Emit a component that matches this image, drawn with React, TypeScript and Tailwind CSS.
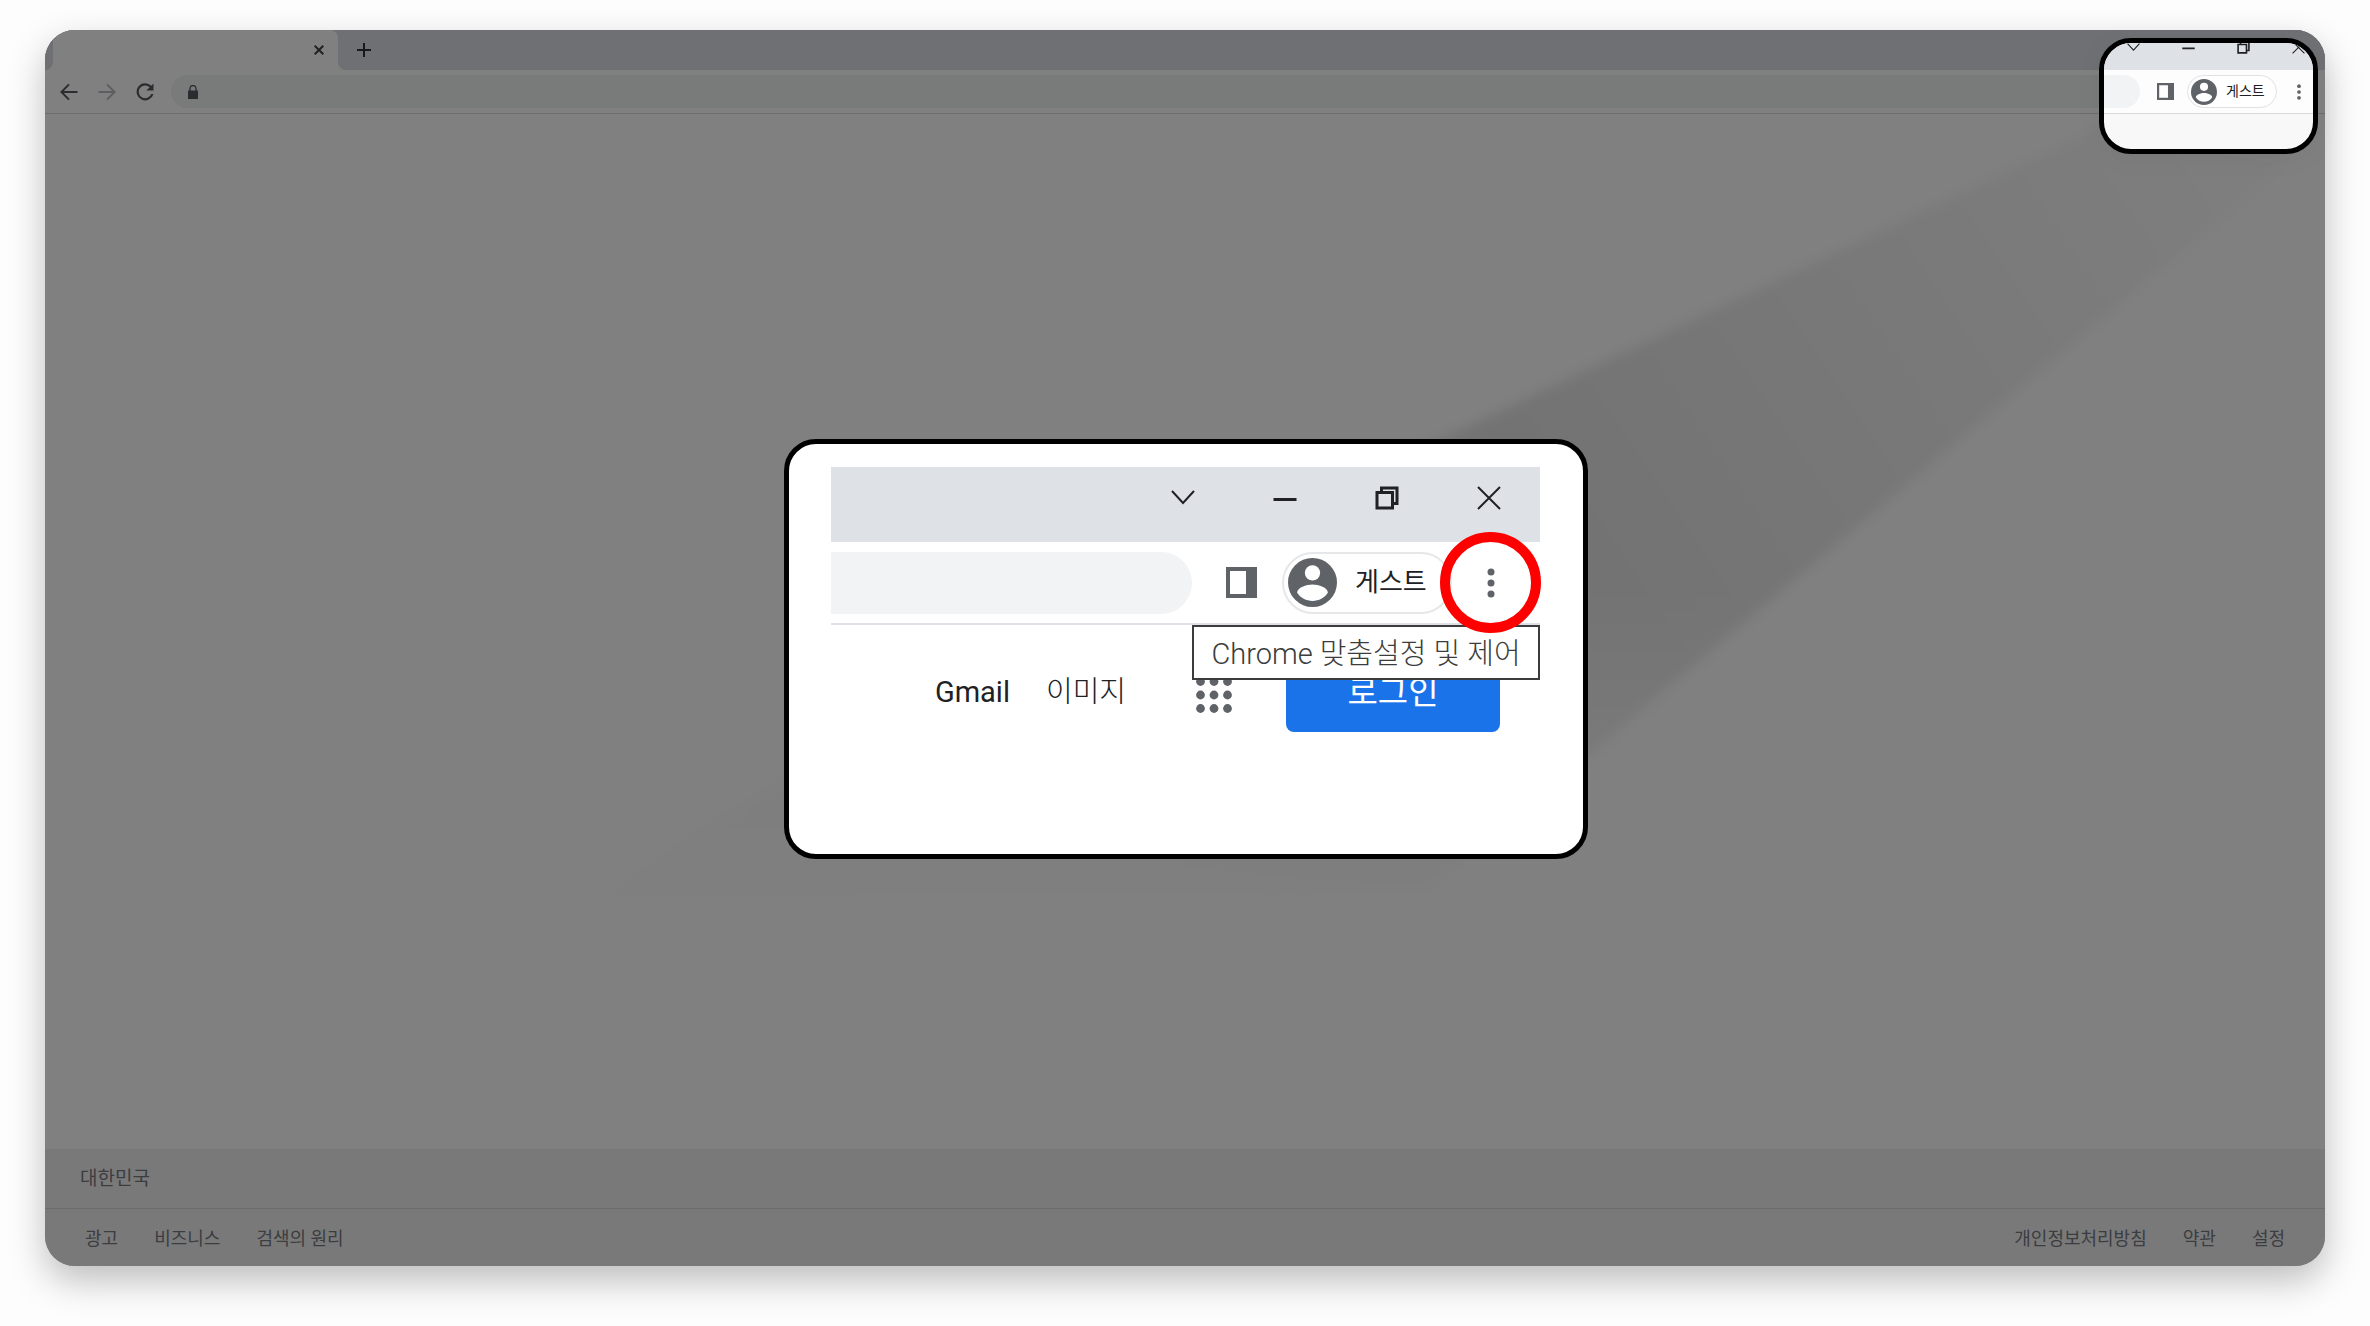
import type { ReactNode } from "react";

interface IconProps {
  readonly className?: string;
}

interface ControlButtonProps {
  readonly label: string;
  readonly className: string;
  readonly children: ReactNode;
}

const LEFT_LINKS = ["광고", "비즈니스", "검색의 원리"];
const RIGHT_LINKS = ["개인정보처리방침", "약관", "설정"];

function ChevronIcon({ className }: IconProps) {
  return (
    <svg viewBox="0 0 24 24" className={className} fill="none" stroke="currentColor" strokeWidth="2">
      <path d="M1 5l11 12L23 5" />
    </svg>
  );
}

function MinimizeIcon({ className }: IconProps) {
  return (
    <svg viewBox="0 0 24 24" className={className} fill="none" stroke="currentColor" strokeWidth="3">
      <path d="M.5 13.5h23" />
    </svg>
  );
}

function RestoreIcon({ className }: IconProps) {
  return (
    <svg viewBox="0 0 24 24" className={className} fill="none" stroke="currentColor" strokeWidth="3">
      <path d="M2 6.5h15.5V22H2zM6.5 6.5V2H22v15.5h-4.5" />
    </svg>
  );
}

function CloseIcon({ className }: IconProps) {
  return (
    <svg viewBox="0 0 24 24" className={className} fill="none" stroke="currentColor" strokeWidth="2">
      <path d="M1 1l22 22M23 1L1 23" />
    </svg>
  );
}

function SidePanelIcon({ className }: IconProps) {
  return (
    <svg viewBox="0 0 31 31" className={className} fill="#5f6368">
      <path fillRule="evenodd" d="M0 0h31v31H0zM4 4v23h16V4z" />
    </svg>
  );
}

function AvatarIcon({ className }: IconProps) {
  return (
    <svg viewBox="0 0 48 48" className={className}>
      <circle cx="24" cy="24" r="24" fill="#5f6368" />
      <circle cx="24" cy="14.5" r="7.5" fill="#fff" />
      <path d="M9 34c0-5 9-8 15-8s15 3 15 8c-3 5-9 8-15 8s-12-3-15-8z" fill="#fff" />
    </svg>
  );
}

function MoreIcon({ className }: IconProps) {
  return (
    <svg viewBox="0 0 8 30" className={className} fill="#5f6368">
      <circle cx="4" cy="4" r="3.5" />
      <circle cx="4" cy="15" r="3.5" />
      <circle cx="4" cy="26" r="3.5" />
    </svg>
  );
}

function AppsIcon({ className }: IconProps) {
  return (
    <svg viewBox="0 0 36 36" className={className} fill="#5f6368">
      {[4.5, 18, 31.5].map((y) =>
        [4.5, 18, 31.5].map((x) => <circle key={`${x}-${y}`} cx={x} cy={y} r="4.4" />)
      )}
    </svg>
  );
}

function ControlButton({ label, className, children }: ControlButtonProps) {
  return (
    <button type="button" aria-label={label} className={`flex shrink-0 items-center justify-center ${className}`}>
      {children}
    </button>
  );
}

function TabStrip() {
  return (
    <div className="flex h-10 bg-[#6f7073]">
      <div className="w-2 bg-[#808080]">
        <div className="h-full rounded-br-lg bg-[#6f7073]" />
      </div>
      <div className="flex w-[285px] items-center justify-end rounded-tr-lg bg-[#808080] pr-[14px]">
        <ControlButton label="탭 닫기" className="size-[10px] text-[#202124]">
          <svg viewBox="0 0 10 10" className="size-[10px]" stroke="currentColor" strokeWidth="2">
            <path d="M.7.7l8.6 8.6M9.3.7L.7 9.3" />
          </svg>
        </ControlButton>
      </div>
      <div className="flex flex-1 bg-[#808080]">
        <div className="flex flex-1 items-center rounded-bl-lg bg-[#6f7073] pl-[19px]">
          <ControlButton label="새 탭" className="size-[14px] text-[#18191b]">
            <svg viewBox="0 0 14 14" className="size-[14px]" stroke="currentColor" strokeWidth="2">
              <path d="M7 0v14M0 7h14" />
            </svg>
          </ControlButton>
        </div>
      </div>
    </div>
  );
}

function Toolbar() {
  return (
    <div className="flex h-11 items-center border-b border-[#6c6d6e] pl-3 pr-[185px] text-[#2a2c2f]">
      <ControlButton label="뒤로" className="size-6">
        <svg viewBox="0 0 24 24" className="size-6" fill="currentColor">
          <path d="M20.5 11H6.8l5.9-5.9L11.3 3.7 3 12l8.3 8.3 1.4-1.4L6.8 13h13.7z" />
        </svg>
      </ControlButton>
      <ControlButton label="앞으로" className="ml-[14px] size-6 text-[#5c5e61]">
        <svg viewBox="0 0 24 24" className="size-6" fill="currentColor">
          <path d="M3.5 11h13.7l-5.9-5.9 1.4-1.4L21 12l-8.3 8.3-1.4-1.4 5.9-5.9H3.5z" />
        </svg>
      </ControlButton>
      <ControlButton label="새로고침" className="ml-[14px] size-6">
        <svg viewBox="0 0 24 24" className="size-6" fill="currentColor">
          <path d="M18.3 5.7A8.6 8.6 0 1 0 20.5 14h-2.3a6.4 6.4 0 1 1-1.5-6.7L13.3 10.6h7.2V3.5z" />
        </svg>
      </ControlButton>
      <label className="ml-[14px] flex h-[33px] flex-1 items-center rounded-full bg-[#797a7a] pl-[17px]">
        <svg viewBox="0 0 10 14" className="h-[14px] w-[10px]" fill="currentColor">
          <path d="M0 5.5h10V14H0z" />
          <path d="M2 6V3.5a3 3 0 0 1 6 0V6" fill="none" stroke="currentColor" strokeWidth="1.3" />
        </svg>
        <input aria-label="주소창" className="ml-3 min-w-0 flex-1 bg-transparent text-sm outline-none" />
      </label>
    </div>
  );
}

function Footer() {
  return (
    <footer className="bg-[#797979] text-[#3b3d40]">
      <div className="flex h-[60px] items-center border-b border-[#6b6c6d] px-[35px] pt-0.5 text-[19px]">대한민국</div>
      <div className="flex h-[57px] items-center justify-between px-10 pt-0.5 text-[18px]">
        <nav className="flex gap-9">
          {LEFT_LINKS.map((link) => (
            <a key={link} href="#">{link}</a>
          ))}
        </nav>
        <nav className="flex gap-9">
          {RIGHT_LINKS.map((link) => (
            <a key={link} href="#">{link}</a>
          ))}
        </nav>
      </div>
    </footer>
  );
}

// Shadow cast from the corner lens down to the zoom panel
function Beam() {
  return (
    <svg
      viewBox="0 0 2280 1236"
      preserveAspectRatio="none"
      className="pointer-events-none absolute inset-0 h-full w-full"
    >
      <defs>
        <linearGradient id="beam" gradientUnits="userSpaceOnUse" x1="2180" y1="80" x2="1000" y2="870">
          <stop offset="0" stopColor="#000" stopOpacity="0.01" />
          <stop offset="0.55" stopColor="#000" stopOpacity="0.1" />
          <stop offset="0.7" stopColor="#000" stopOpacity="0.09" />
          <stop offset="1" stopColor="#000" stopOpacity="0.03" />
        </linearGradient>
        <linearGradient id="fade" gradientUnits="userSpaceOnUse" x1="0" y1="560" x2="0" y2="870">
          <stop offset="0" stopColor="#fff" />
          <stop offset="1" stopColor="#fff" stopOpacity="0.1" />
        </linearGradient>
        <mask id="beam-mask" maskUnits="userSpaceOnUse" x="0" y="0" width="2280" height="1236">
          <rect width="2280" height="1236" fill="url(#fade)" />
        </mask>
        <filter id="soften">
          <feGaussianBlur stdDeviation="6" />
        </filter>
      </defs>
      <g mask="url(#beam-mask)">
        <path d="M2245 129L1543 725L1378 860L557 868L734 753L1398 408L2056 98z" fill="url(#beam)" filter="url(#soften)" />
      </g>
    </svg>
  );
}

function CornerLens() {
  return (
    <section className="absolute right-[7px] top-2 flex h-[116px] w-[219px] flex-col overflow-hidden rounded-[32px] border-[5px] border-black bg-[#f8f8f8] text-[#202124] shadow-[0_4px_30px_rgba(0,0,0,0.04)]">
      <div className="flex h-[27px] shrink-0 items-start justify-end bg-[#dee1e6]">
        <div className="-mr-[13px] -mt-1 flex">
          <ControlButton label="탭 검색" className="h-4 w-[55px]"><ChevronIcon className="size-[13px]" /></ControlButton>
          <ControlButton label="최소화" className="h-4 w-[55px]"><MinimizeIcon className="size-[13px]" /></ControlButton>
          <ControlButton label="이전 크기로 복원" className="h-4 w-[55px]"><RestoreIcon className="size-[13px]" /></ControlButton>
          <ControlButton label="닫기" className="h-4 w-[55px]"><CloseIcon className="size-[13px]" /></ControlButton>
        </div>
      </div>
      <div className="flex h-11 shrink-0 items-center border-b border-[#d8dadc] bg-[#fdfdfd] pr-[6px]">
        <div className="h-[33px] flex-1 rounded-r-full bg-[#f1f3f4]" />
        <ControlButton label="측면 패널" className="ml-[17px] size-[17px]"><SidePanelIcon className="size-[17px]" /></ControlButton>
        <button type="button" className="ml-[13px] flex h-[33px] w-[90px] items-center rounded-full border border-[#dfe1e4] bg-white pl-[3px] text-[14px]">
          <AvatarIcon className="size-[26px] shrink-0" />
          <span className="ml-[9px]">게스트</span>
        </button>
        <ControlButton label="Chrome 맞춤설정 및 제어" className="ml-[14px] w-4"><MoreIcon className="h-4 w-4" /></ControlButton>
      </div>
    </section>
  );
}

function ZoomPanel() {
  return (
    <section className="w-[804px] rounded-[32px] border-[5px] border-black bg-white pb-[122px] pl-[42px] pr-[43px] pt-[23px] text-[#202124]">
      <div className="flex h-[75px] items-start justify-end bg-[#dee1e6]">
        <ControlButton label="탭 검색" className="h-[62px] w-[102px]"><ChevronIcon className="size-6" /></ControlButton>
        <ControlButton label="최소화" className="h-[62px] w-[102px]"><MinimizeIcon className="size-6" /></ControlButton>
        <ControlButton label="이전 크기로 복원" className="h-[62px] w-[102px]"><RestoreIcon className="size-6" /></ControlButton>
        <ControlButton label="닫기" className="h-[62px] w-[102px]"><CloseIcon className="size-6" /></ControlButton>
      </div>

      <div className="relative flex h-[83px] items-center border-b-2 border-[#dee1e6] pr-[10px]">
        <div className="h-[62px] flex-1 rounded-r-full bg-[#f1f3f4]" />
        <ControlButton label="측면 패널" className="ml-[34px]"><SidePanelIcon className="size-[31px]" /></ControlButton>
        <button type="button" className="ml-[25px] flex h-[62px] w-[170px] items-center rounded-full border-2 border-[#e6e7e9] pl-1 text-[26px]">
          <AvatarIcon className="size-[49px] shrink-0" />
          <span className="ml-[18px]">게스트</span>
        </button>
        <div className="relative flex h-[62px] w-[78px] items-center justify-center">
          <ControlButton label="Chrome 맞춤설정 및 제어" className="size-10"><MoreIcon className="h-[30px] w-2" /></ControlButton>
          <span className="pointer-events-none absolute -left-3 -top-5 z-20 size-[101px] rounded-full border-10 border-[#ff0000]" />
        </div>
        <div
          role="tooltip"
          className="absolute right-0 top-[83px] z-10 flex h-[55px] w-[348px] items-center justify-center whitespace-nowrap border-2 border-[#3c3c3c] bg-white pt-1 text-[29px] font-light text-[#3c3c3c]"
        >
          Chrome 맞춤설정 및 제어
        </div>
      </div>

      <div className="flex items-center justify-end pr-10 pt-8 text-[29px]">
        <a href="#" className="pb-1">Gmail</a>
        <a href="#" className="ml-9 pb-1 font-light">이미지</a>
        <ControlButton label="Google 앱" className="ml-[70px]"><AppsIcon className="size-9" /></ControlButton>
        <button type="button" className="ml-[54px] h-[75px] w-[214px] rounded-lg bg-[#1a73e8] pb-1 text-[33px] text-white">
          로그인
        </button>
      </div>
    </section>
  );
}

export default function App() {
  return (
    <main className="flex min-h-screen flex-col bg-[#fdfdfd] px-[45px] pb-[60px] pt-[30px] font-['Roboto','Noto_Sans_CJK_KR',sans-serif]">
      <div className="relative flex flex-1 flex-col">
        <div className="relative flex flex-1 flex-col overflow-hidden rounded-[30px] bg-[#808080] shadow-[0_15px_36px_rgba(0,0,0,0.25)]">
          <TabStrip />
          <Toolbar />
          <div className="flex-1" />
          <Footer />
          <Beam />
        </div>
        <CornerLens />
        <div className="absolute inset-0 flex items-center justify-center pl-0.5 pt-0.5">
          <ZoomPanel />
        </div>
      </div>
    </main>
  );
}
